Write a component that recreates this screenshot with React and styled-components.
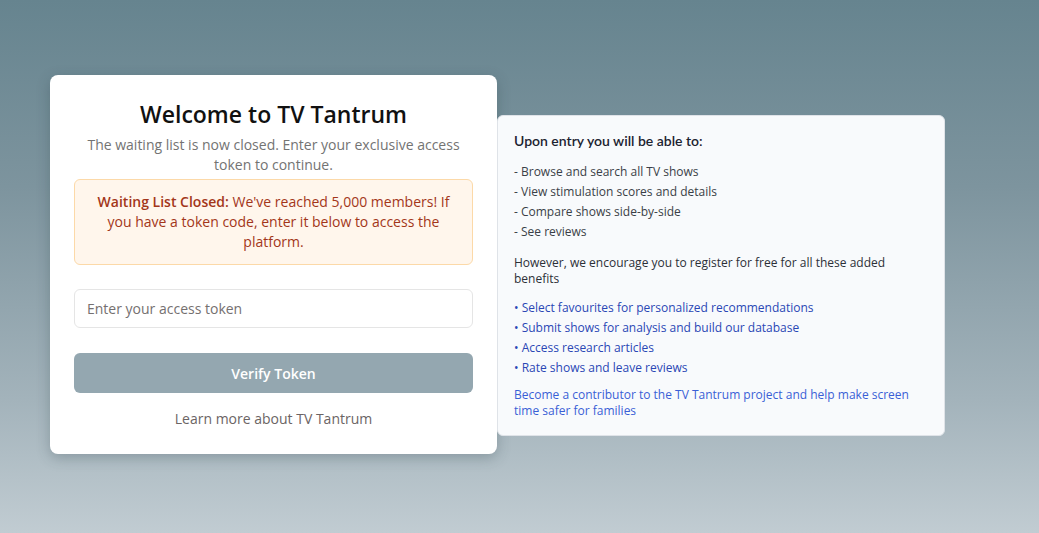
import React from "react";
import styled, { createGlobalStyle } from "styled-components";

const GlobalStyle = createGlobalStyle`
  * { box-sizing: border-box; }
  html, body { margin: 0; padding: 0; }
  body {
    font-family: "Open Sans", "Noto Sans", sans-serif;
    background: linear-gradient(to bottom, #66848f 0%, #7d949e 35%, #a3b3bb 75%, #c1ccd2 100%);
    min-height: 533px;
  }
`;

const Page = styled.div`
  display: flex;
  align-items: flex-start;
  min-height: 533px;
  padding: 75px 0 0 50px;
`;

const Card = styled.div`
  width: 447px;
  background: #ffffff;
  border-radius: 8px;
  padding: 23px 24px 25px;
  box-shadow: 0 4px 14px rgba(40, 60, 70, 0.28);
  display: flex;
  flex-direction: column;
  text-align: center;
`;

const Title = styled.h1`
  margin: 0;
  font-size: 23px;
  line-height: 32px;
  font-weight: 600;
  color: #111111;
`;

const Subtitle = styled.p`
  margin: 5px 0 0;
  font-size: 14px;
  line-height: 19.5px;
  color: #737373;
  padding: 0 6px;
`;

const Alert = styled.div`
  margin-top: 5px;
  padding: 12px 16px;
  border: 1px solid #fcd9a8;
  border-radius: 6px;
  background: #fff6ec;
  color: #a3361a;
  font-size: 14px;
  line-height: 20px;

  strong {
    font-weight: 600;
  }
`;

const Input = styled.input`
  margin-top: 24px;
  height: 39px;
  padding: 0 12px;
  border: 1px solid #e5e5e5;
  border-radius: 6px;
  font-family: inherit;
  font-size: 14px;
  color: #333;
  outline: none;

  &::placeholder {
    color: #757070;
  }
`;

const Button = styled.button`
  margin-top: 25px;
  height: 40px;
  border: none;
  border-radius: 6px;
  background: #94a7b0;
  color: #ffffff;
  font-family: inherit;
  font-size: 14px;
  font-weight: 600;
`;

const LearnLink = styled.a`
  margin-top: 16px;
  font-size: 14px;
  line-height: 20px;
  color: #6b6464;
  text-decoration: none;
`;

const InfoPanel = styled.div`
  width: 448px;
  margin-top: 40px;
  background: #f8fafc;
  border: 1px solid #dfe3e8;
  border-radius: 6px;
  padding: 15px 16px 16px;
  font-size: 12px;
`;

const InfoHeading = styled.h3`
  margin: 0;
  font-family: "Lato", "Noto Sans", sans-serif;
  font-size: 14px;
  line-height: 20px;
  font-weight: 600;
  color: #1c2230;
`;

const List = styled.ul`
  list-style: none;
  margin: ${(p) => p.$mt || 10}px 0 0;
  padding: 0;

  li {
    line-height: 20px;
    color: ${(p) => p.$color || "#3a3f47"};
  }
`;

const Paragraph = styled.p`
  margin: ${(p) => p.$mt}px 0 0;
  line-height: 16px;
  color: ${(p) => p.$color};
`;

const features = [
  "Browse and search all TV shows",
  "View stimulation scores and details",
  "Compare shows side-by-side",
  "See reviews",
];

const benefits = [
  "Select favourites for personalized recommendations",
  "Submit shows for analysis and build our database",
  "Access research articles",
  "Rate shows and leave reviews",
];

export default function App() {
  return (
    <>
      <GlobalStyle />
      <Page>
        <Card>
          <Title>Welcome to TV Tantrum</Title>
          <Subtitle>
            The waiting list is now closed. Enter your exclusive access token
            to continue.
          </Subtitle>
          <Alert>
            <strong>Waiting List Closed:</strong> We've reached 5,000 members!
            If you have a token code, enter it below to access the platform.
          </Alert>
          <Input placeholder="Enter your access token" />
          <Button>Verify Token</Button>
          <LearnLink href="#">Learn more about TV Tantrum</LearnLink>
        </Card>
        <InfoPanel>
          <InfoHeading>Upon entry you will be able to:</InfoHeading>
          <List $mt={11}>
            {features.map((f) => (
              <li key={f}>- {f}</li>
            ))}
          </List>
          <Paragraph $mt={13} $color="#2c3038">
            However, we encourage you to register for free for all these added
            benefits
          </Paragraph>
          <List $mt={11} $color="#2a47b5">
            {benefits.map((b) => (
              <li key={b}>• {b}</li>
            ))}
          </List>
          <Paragraph $mt={9} $color="#3a5fd6">
            Become a contributor to the TV Tantrum project and help make screen
            time safer for families
          </Paragraph>
        </InfoPanel>
      </Page>
    </>
  );
}
